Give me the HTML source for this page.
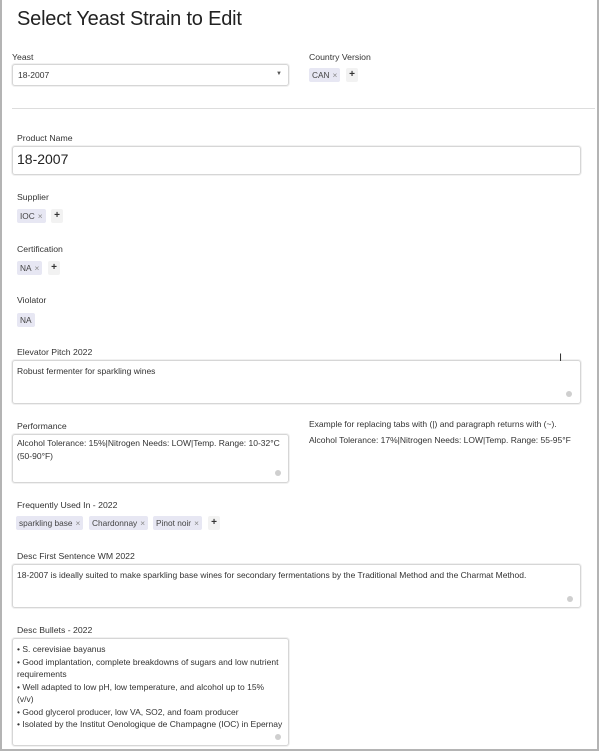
<!DOCTYPE html>
<html><head><meta charset="utf-8"><style>
*{box-sizing:border-box;margin:0;padding:0}
body{width:600px;height:753px;background:#fff;font-family:"Liberation Sans",Arial,sans-serif;color:#1f1f1f;position:relative;overflow:hidden}
.frame{position:absolute;left:0;top:0;width:599px;height:751px;border:2px solid #b4b4b4;border-top:none}
.a{position:absolute}
h1{position:absolute;left:17px;top:8px;font-size:20px;font-weight:400;color:#222;letter-spacing:-0.2px}
.lbl{position:absolute;font-size:8.7px;color:#333}
.box{position:absolute;border:1px solid #d6d6d6;border-radius:3px;background:#fff;box-shadow:0 0 0 1px #f1f1f1}
.t{position:absolute;font-size:8.5px;color:#333;line-height:12.5px}
.chip{position:absolute;height:14px;background:#e7e7f3;border-radius:2px;font-size:8.3px;color:#444;line-height:14px;padding:0 3px}
.chip .x{color:#888;margin-left:3px}
.plus{position:absolute;width:12px;height:14px;background:#f2f2f2;border-radius:2px;font-size:10px;line-height:14px;text-align:center;font-weight:bold;color:#333}
.grip{position:absolute;width:6px;height:6px;border-radius:50%;background:#cfcfcf}
</style></head><body>
<div class="frame"></div>
<h1>Select Yeast Strain to Edit</h1>

<div class="lbl" style="left:12px;top:52px">Yeast</div>
<div class="box" style="left:12px;top:64px;width:277px;height:22px"></div>
<div class="t" style="left:18px;top:69px">18-2007</div>
<div class="a" style="left:276px;top:71px;font-size:6px;color:#555">▼</div>

<div class="lbl" style="left:309px;top:52px">Country Version</div>
<div class="chip" style="left:309px;top:68px">CAN<span class="x">×</span></div>
<div class="plus" style="left:346px;top:68px">+</div>

<div class="a" style="left:12px;top:108px;width:583px;height:1px;background:#ddd"></div>

<div class="lbl" style="left:17px;top:133px">Product Name</div>
<div class="box" style="left:12px;top:146px;width:569px;height:29px"></div>
<div class="a" style="left:17px;top:151px;font-size:14px;color:#222">18-2007</div>

<div class="lbl" style="left:17px;top:192px">Supplier</div>
<div class="chip" style="left:17px;top:209px">IOC<span class="x">×</span></div>
<div class="plus" style="left:51px;top:209px">+</div>

<div class="lbl" style="left:17px;top:244px">Certification</div>
<div class="chip" style="left:17px;top:261px">NA<span class="x">×</span></div>
<div class="plus" style="left:48px;top:261px">+</div>

<div class="lbl" style="left:17px;top:295px">Violator</div>
<div class="chip" style="left:17px;top:313px">NA</div>

<div class="lbl" style="left:17px;top:347px">Elevator Pitch 2022</div>
<div class="box" style="left:12px;top:360px;width:569px;height:44px"></div>
<div class="t" style="left:17px;top:365px">Robust fermenter for sparkling wines</div>
<div class="grip" style="left:566px;top:391px"></div>
<div class="a" style="left:559px;top:352px;font-size:11px;color:#333">I</div>

<div class="lbl" style="left:17px;top:421px">Performance</div>
<div class="box" style="left:12px;top:434px;width:277px;height:49px"></div>
<div class="t" style="left:17px;top:437px;width:268px">Alcohol Tolerance: 15%|Nitrogen Needs: LOW|Temp. Range: 10-32°C<br>(50-90°F)</div>
<div class="grip" style="left:275px;top:470px"></div>
<div class="t" style="left:309px;top:418px">Example for replacing tabs with (|) and paragraph returns with (~).</div>
<div class="t" style="left:309px;top:434px">Alcohol Tolerance: 17%|Nitrogen Needs: LOW|Temp. Range: 55-95°F</div>

<div class="lbl" style="left:17px;top:500px">Frequently Used In - 2022</div>
<div class="chip" style="left:16px;top:516px">sparkling base<span class="x">×</span></div>
<div class="chip" style="left:89px;top:516px">Chardonnay<span class="x">×</span></div>
<div class="chip" style="left:153px;top:516px">Pinot noir<span class="x">×</span></div>
<div class="plus" style="left:208px;top:516px">+</div>

<div class="lbl" style="left:17px;top:551px">Desc First Sentence WM 2022</div>
<div class="box" style="left:12px;top:564px;width:569px;height:44px"></div>
<div class="t" style="left:17px;top:569px;white-space:nowrap">18-2007 is ideally suited to make sparkling base wines for secondary fermentations by the Traditional Method and the Charmat Method.</div>
<div class="grip" style="left:567px;top:596px"></div>

<div class="lbl" style="left:17px;top:625px">Desc Bullets - 2022</div>
<div class="box" style="left:12px;top:638px;width:277px;height:108px"></div>
<div class="t" style="left:17px;top:643px;width:270px">• S. cerevisiae bayanus<br>• Good implantation, complete breakdowns of sugars and low nutrient requirements<br>• Well adapted to low pH, low temperature, and alcohol up to 15%<br>(v/v)<br>• Good glycerol producer, low VA, SO2, and foam producer<br>• Isolated by the Institut Oenologique de Champagne (IOC) in Epernay</div>
<div class="grip" style="left:275px;top:734px"></div>
</body></html>
